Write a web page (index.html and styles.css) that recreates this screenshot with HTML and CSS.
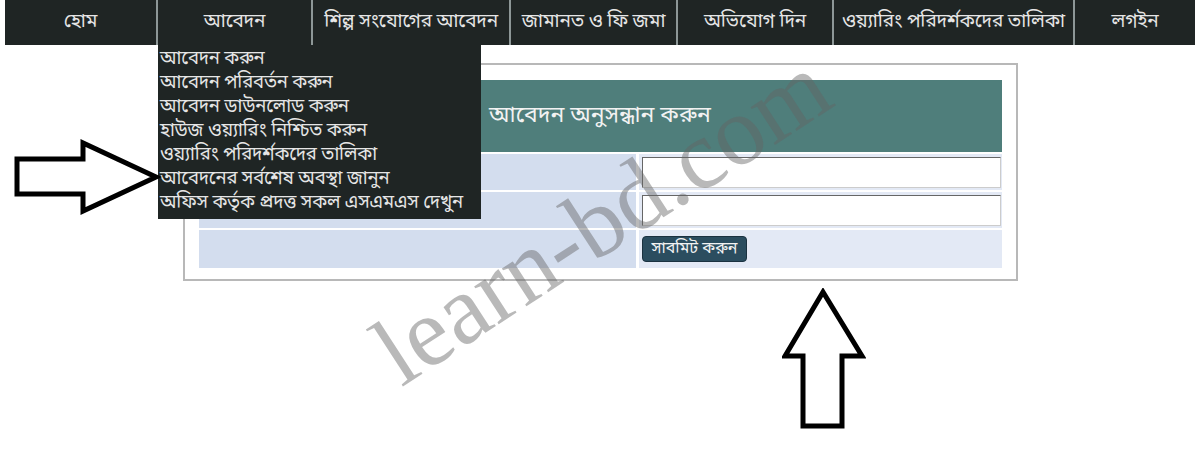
FILE: index.html
```html
<!DOCTYPE html>
<html lang="bn">
<head>
  <meta charset="UTF-8">
  <title>আবেদন অনুসন্ধান করুন</title>
  <meta name="viewport" content="width=device-width, initial-scale=1.0">
  <link rel="stylesheet" href="styles.css">
</head>
<body>
  <ul class="menu">
    <li class="menu-item w-home">হোম</li>
    <li class="menu-item w-apply open">আবেদন
      <ul class="submenu">
        <li>আবেদন করুন</li>
        <li>আবেদন পরিবর্তন করুন</li>
        <li>আবেদন ডাউনলোড করুন</li>
        <li>হাউজ ওয়্যারিং নিশ্চিত করুন</li>
        <li>ওয়্যারিং পরিদর্শকদের তালিকা</li>
        <li>আবেদনের সর্বশেষ অবস্থা জানুন</li>
        <li>অফিস কর্তৃক প্রদত্ত সকল এসএমএস দেখুন</li>
      </ul>
    </li>
    <li class="menu-item w-industry">শিল্প সংযোগের আবেদন</li>
    <li class="menu-item w-deposit">জামানত ও ফি জমা</li>
    <li class="menu-item w-complain">অভিযোগ দিন</li>
    <li class="menu-item w-wiring">ওয়্যারিং পরিদর্শকদের তালিকা</li>
    <li class="menu-item w-login">লগইন</li>
  </ul>

  <div class="search-box">
    <table class="search-table">
      <tr>
        <th colspan="2">আবেদন অনুসন্ধান করুন</th>
      </tr>
      <tr>
        <td class="label"></td>
        <td class="field"><input type="text"></td>
      </tr>
      <tr>
        <td class="label"></td>
        <td class="field"><input type="text"></td>
      </tr>
      <tr class="row-submit">
        <td class="label"></td>
        <td class="field"><button class="submit">সাবমিট করুন</button></td>
      </tr>
    </table>
  </div>

  <!-- pointer arrows drawn over the page -->
  <svg class="arrow arrow-right" width="150" height="76" viewBox="0 0 150 76">
    <path d="M4 20 H70 V4 L143 38 L70 72 V55 H4 Z" fill="none" stroke="#000" stroke-width="5" stroke-linejoin="miter"/>
  </svg>
  <svg class="arrow arrow-up" width="84" height="144" viewBox="0 0 84 144">
    <path d="M41 4 L80 68 H60 V138 H21 V68 H3 Z" fill="none" stroke="#000" stroke-width="5" stroke-linejoin="miter"/>
  </svg>

  <div class="watermark">learn-bd.com</div>
</body>
</html>
```

FILE: styles.css
```css
body {
  margin: 0;
  padding: 0 5px;
  background: #fff;
  font-family: "Noto Sans Bengali", "Lohit Bengali", "Noto Serif Bengali", "FreeSans", "Noto Sans", sans-serif;
  color: #222;
  position: relative;
  height: 468px;
  overflow: hidden;
}

/* top navigation */
.menu {
  display: flex;
  margin: 0;
  padding: 0;
  list-style: none;
  height: 45px;
  background: #1f2524;
}
.menu-item {
  position: relative;
  display: flex;
  align-items: center;
  justify-content: center;
  color: #e6e6e6;
  font-size: 19px;
  letter-spacing: -0.2px;
  white-space: nowrap;
  border-right: 2px solid #8d9797;
  box-sizing: border-box;
}
.menu-item:last-child {
  border-right: none;
}
.w-home { width: 153px; }
.w-apply { width: 155px; }
.w-industry { width: 198px; }
.w-deposit { width: 167px; }
.w-complain { width: 156px; }
.w-wiring { width: 241px; }
.w-login { flex: 1; }

.submenu {
  position: absolute;
  top: 45px;
  left: 0;
  width: 323px;
  margin: 0;
  padding: 3px 0 3px 2px;
  box-sizing: border-box;
  list-style: none;
  background: #1f2524;
  z-index: 5;
}
.submenu li {
  height: 24px;
  line-height: 24px;
  font-size: 18.5px;
  letter-spacing: -0.2px;
  color: #e6e6e6;
  white-space: nowrap;
}

/* search form */
.search-box {
  width: 835px;
  margin: 18px auto 0;
  padding: 13px 14px 9px;
  box-sizing: border-box;
  border: 2px solid #b8b8b8;
  background: #fff;
}
.search-table {
  width: 100%;
  border-collapse: separate;
  border-spacing: 0 2px;
}
.search-table th {
  height: 72px;
  padding: 0;
  background: #4f7e7b;
  color: #f2f2f2;
  font-weight: normal;
  font-size: 23px;
  text-align: center;
}
.search-table td {
  height: 36px;
  padding: 0;
  vertical-align: middle;
}
.search-table td.label {
  width: 437px;
  background: #d3ddee;
  border-right: 3px solid #fff;
}
.search-table td.field {
  background: #e3e9f5;
  padding: 0 1px 0 3px;
}
.search-table .row-submit td {
  height: 38px;
}
.search-table input {
  display: block;
  width: 100%;
  height: 31px;
  box-sizing: border-box;
  border: 1px solid #666;
  border-right-color: #ccc;
  border-bottom-color: #ccc;
  background: #fff;
}
.submit {
  display: block;
  height: 26px;
  padding: 0 9px;
  border: 1px solid #1b3240;
  border-radius: 4px;
  background: #2b4d5f;
  color: #f2f2f2;
  font-family: inherit;
  font-size: 16px;
  line-height: 24px;
}

/* overlay marks */
.arrow {
  position: absolute;
  z-index: 6;
}
.arrow-right {
  left: 13px;
  top: 139px;
}
.arrow-up {
  left: 782px;
  top: 288px;
}
.watermark {
  position: absolute;
  left: 410px;
  top: 303px;
  height: 98px;
  line-height: 98px;
  font-family: "Liberation Serif", serif;
  font-size: 98px;
  color: rgba(100, 100, 100, 0.45);
  transform: rotate(-33deg);
  transform-origin: 0 100%;
  white-space: nowrap;
  z-index: 7;
  pointer-events: none;
}
```
